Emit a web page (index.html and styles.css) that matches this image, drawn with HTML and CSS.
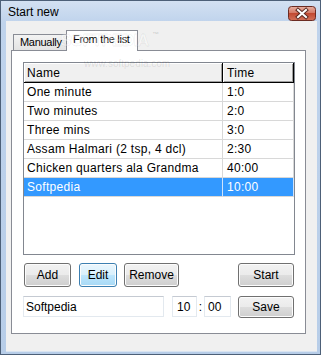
FILE: index.html
```html
<!DOCTYPE html>
<html lang="en">
<head>
  <meta charset="UTF-8" />
  <title>Start new</title>
  <link rel="stylesheet" href="styles.css">
</head>
<body>

  <div class="window">
    <div class="titlebar">
      <span class="title">Start new</span>
      <div class="close">
        <svg width="28" height="15" viewBox="0 0 28 15">
          <defs>
            <linearGradient id="red" x1="0" y1="0" x2="0" y2="1">
              <stop offset="0" stop-color="#e8b2a4" />
              <stop offset="0.45" stop-color="#d47a66" />
              <stop offset="0.5" stop-color="#c24a32" />
              <stop offset="1" stop-color="#d2725a" />
            </linearGradient>
          </defs>
          <rect x="0.5" y="0.5" width="27" height="14" rx="3" fill="url(#red)" stroke="#6b2b22" />
          <path d="M10 4 L18 11 M18 4 L10 11" stroke="#5a2a22" stroke-width="4" stroke-linecap="square" />
          <path d="M10 4 L18 11 M18 4 L10 11" stroke="#fff" stroke-width="2" stroke-linecap="square" />
        </svg>
      </div>
    </div>

    <div class="client">
      <div class="tabs">
        <div class="tab">Manually</div>
        <div class="tab active">From the list</div>
      </div>

      <div class="panel">
        <div class="list">
          <div class="head">Name</div>
          <div class="head">Time</div>

          <div class="cell">One minute</div><div class="cell">1:0</div>
          <div class="cell">Two minutes</div><div class="cell">2:0</div>
          <div class="cell">Three mins</div><div class="cell">3:0</div>
          <div class="cell">Assam Halmari (2 tsp, 4 dcl)</div><div class="cell">2:30</div>
          <div class="cell">Chicken quarters ala Grandma</div><div class="cell">40:00</div>
          <div class="cell selected">Softpedia</div><div class="cell selected">10:00</div>
        </div>

        <div class="buttons">
          <button class="btn btn-add">Add</button>
          <button class="btn btn-edit focus">Edit</button>
          <button class="btn btn-remove">Remove</button>
          <button class="btn btn-start">Start</button>
        </div>

        <div class="editrow">
          <input class="field name" value="Softpedia" />
          <input class="field hour" value="10" />
          <span class="colon">:</span>
          <input class="field minute" value="00" />
          <button class="btn btn-save">Save</button>
        </div>
      </div>

      <div class="watermark">SOFTPEDIA<span class="tm">™</span></div>
      <div class="watermark-url">www.softpedia.com</div>
    </div>
  </div>

</body>
</html>
```

FILE: styles.css
```css
* { box-sizing: border-box; }
body { margin: 0; font-family: "Liberation Sans", Arial, sans-serif; font-size: 12px; color: #000; }

.window {
  width: 321px;
  height: 355px;
  display: flex;
  flex-direction: column;
  border: 1px solid #4d6078;
  background: linear-gradient(to bottom, #d3e1f2 0, #bfd3ec 22px, #b7cde8 100%);
}

.titlebar {
  height: 21px;
  display: flex;
  align-items: center;
  justify-content: space-between;
  padding: 0 4px 0 7px;
}
.title { font-size: 12px; margin-top: 2px; }
.close { width: 28px; height: 15px; margin-top: 4px; }
.close svg { display: block; }

.client {
  position: relative;
  flex: 1;
  margin: 0 3px 2px 5px;
  background: #f0f0f0;
  border-bottom: 1px solid #d9e4f1;
  padding: 9px 11px 17px 5px;
  display: flex;
  flex-direction: column;
}

.tabs {
  display: flex;
  align-items: flex-end;
  height: 20px;
  padding-left: 2px;
  position: relative;
  z-index: 1;
}
.tab {
  height: 16px;
  width: 54px;
  padding: 0 0 0 6px;
  border: 1px solid #898c95;
  border-bottom: none;
  background: linear-gradient(to bottom, #f3f3f3, #e3e3e3);
  font-size: 11px;
  letter-spacing: -0.3px;
  line-height: 15px;
  white-space: nowrap;
  overflow: hidden;
}
.tab.active {
  height: 21px;
  width: 72px;
  margin-bottom: -1px;
  margin-left: -1px;
  background: #fff;
  padding-left: 6px;
  line-height: 17px;
}

.panel {
  width: 295px;
  height: 284px;
  border: 1px solid #898c95;
  background: #fff;
  padding: 11px 11px 0 11px;
}

.list {
  width: 272px;
  height: 193px;
  border: 1px solid #828790;
  display: grid;
  grid-template-columns: 199px 71px;
  grid-auto-rows: 19px;
  align-content: start;
  letter-spacing: 0.3px;
}
.head {
  height: 20px;
  background: #f0f0f0;
  border-right: 1px solid #000;
  border-bottom: 1px solid #000;
  box-shadow: inset 1px 1px #fff, inset -1px -1px #a0a0a0;
  padding: 3px 3px 0 3px;
}
.head + .head { padding-left: 4px; }
.cell {
  border-right: 1px solid #d8d8d8;
  border-bottom: 1px solid #d8d8d8;
  padding: 2px 3px 0 3px;
  white-space: nowrap;
  overflow: hidden;
  margin-top: 1px;
  height: 19px;
}
.cell:nth-child(even) { padding-left: 4px; }
.cell.selected { background: #3399ff; color: #fff; border-right-color: #cfe3fb; }

.buttons {
  display: flex;
  margin-top: 8px;
  height: 24px;
  padding-left: 1px;
}
.btn {
  font-family: "Liberation Sans", Arial, sans-serif;
  font-size: 12px;
  height: 24px;
  border: 1px solid #707070;
  border-radius: 3px;
  background: linear-gradient(to bottom, #f2f2f2 0, #ebebeb 50%, #dddddd 51%, #cfcfcf 100%);
  box-shadow: inset 0 0 0 1px #fcfcfc;
  padding: 0;
  color: #000;
}
.btn.focus {
  border-color: #3c7fb1;
  background: linear-gradient(to bottom, #eaf6fd 0, #d9f0fc 50%, #bee6fd 51%, #a7d9f5 100%);
}
.btn-add { width: 47px; }
.btn-edit { width: 38px; margin-left: 8px; }
.btn-remove { width: 55px; margin-left: 7px; }
.btn-start { width: 56px; margin-left: auto; }
.btn-save { width: 56px; margin-left: auto; height: 22px; }

.editrow {
  display: flex;
  align-items: flex-start;
  margin-top: 9px;
}
.field {
  font-family: "Liberation Sans", Arial, sans-serif;
  font-size: 12px;
  height: 21px;
  border: 1px solid #e3e9ef;
  border-top-color: #c5cad2;
  background: #fff;
  padding: 0 2px;
  color: #000;
}
.field.name { width: 141px; }
.field.hour { width: 25px; margin-left: 8px; padding-left: 4px; }
.field.minute { width: 27px; padding-left: 3px; }
.colon { width: 7px; text-align: center; line-height: 23px; }

.watermark {
  position: absolute;
  left: 54px;
  top: 10px;
  font-family: "Liberation Sans", sans-serif;
  font-size: 17px;
  font-weight: bold;
  letter-spacing: -1px;
  color: rgba(255, 255, 255, 0.35);
  -webkit-text-stroke: 1px rgba(0, 0, 0, 0.06);
  z-index: 2;
  pointer-events: none;
}
.watermark .tm { font-size: 7px; vertical-align: top; color: rgba(0, 0, 0, 0.15); -webkit-text-stroke: 0; margin-left: 4px; letter-spacing: 0; }
.watermark-url {
  position: absolute;
  left: 78px;
  top: 37px;
  font-size: 10px;
  color: rgba(0, 0, 0, 0.1);
  z-index: 2;
  pointer-events: none;
}
```
